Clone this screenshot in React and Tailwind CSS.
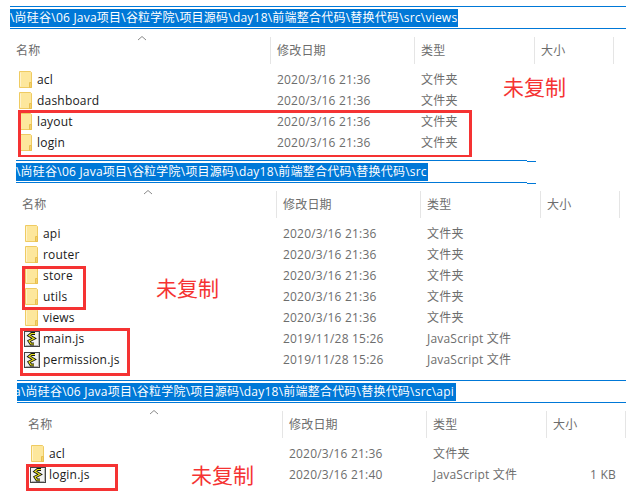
const YH = "font-['Open_Sans','Noto_Sans_CJK_SC',sans-serif]";

function Folder() {
  return (
    <svg width="14" height="17" viewBox="0 0 14 17" className="block shrink-0">
      <path d="M0.5 0.5H11.5L12.5 1.5V16.5H0.5Z" fill="#fde79c" stroke="#efcb62" />
      <path d="M1.5 1.5V15.5" fill="none" stroke="#fff3cc" />
      <path d="M12.5 11.5H10.5V16.5H12.5Z" fill="#f4d26c" stroke="#e8c050" />
    </svg>
  );
}

function Script() {
  return (
    <svg width="16" height="16" viewBox="0 0 16 16" className="block shrink-0 -ml-[1px]">
      <rect x="0.5" y="0.5" width="15" height="15" fill="#f2f2f2" stroke="#444" />
      <path d="M1.5 14.5H14.5V1.5" fill="none" stroke="#b5b5b5" />
      <path d="M11 2.5H7.5L5 4.5L10 7.5L5 10L7 13H10" fill="none" stroke="#111" strokeWidth="2.8" />
      <path d="M11 2.5H7.5L5 4.5L10 7.5L5 10L7 13H10" fill="none" stroke="#ece420" strokeWidth="1.2" />
    </svg>
  );
}

function PathBar({ left, right, selWidth, children, textShift }) {
  return (
    <div
      className="h-[23px] border-y border-[#0078d7] overflow-hidden pt-[2px]"
      style={{ marginLeft: left, marginRight: right }}
    >
      <div
        className="h-[18px] bg-[#0078d7] text-white text-[12px] tracking-[0.22px] leading-[18px] whitespace-nowrap overflow-hidden"
        style={{ width: selWidth }}
      >
        <span className="block" style={{ marginLeft: textShift }}>{children}</span>
      </div>
    </div>
  );
}

function Header({ left }) {
  return (
    <div className="relative h-[27px] text-[12px] tracking-[0.2px] text-[#6d6d6d]" style={{ marginLeft: left }}>
      <div className="flex h-full">
        <div className="w-[260px] pl-[6px] flex items-center">名称</div>
        <div className="w-[144px] pl-[6px] flex items-center border-l border-[#e5e5e5]">修改日期</div>
        <div className="w-[120px] pl-[6px] flex items-center border-l border-[#e5e5e5]">类型</div>
        <div className="w-[80px] pl-[6px] flex items-center border-x border-[#e5e5e5]">大小</div>
      </div>
      <svg width="10" height="6" viewBox="0 0 10 6" className="absolute left-[127px] -top-[2px]">
        <path d="M1 5L5 1.5L9 5" fill="none" stroke="#8a8a8a" />
      </svg>
    </div>
  );
}

function Row({ left, icon, name, date, type, size }) {
  return (
    <div className="flex h-[21px] items-center text-[12px] tracking-[0.2px]" style={{ marginLeft: left }}>
      <div className="w-[260px] flex items-center pl-[9px] text-[#1a1a1a]">
        <div className="w-[18px]">{icon === "js" ? <Script /> : <Folder />}</div>
        <span>{name}</span>
      </div>
      <div className="w-[144px] pl-[7px] text-[#6d6d6d]">{date}</div>
      <div className="w-[120px] pl-[7px] text-[#6d6d6d]">{type}</div>
      <div className="w-[60px] text-right text-[#6d6d6d] ml-[10px]">{size}</div>
    </div>
  );
}

const P = "\\尚硅谷\\06 Java项目\\谷粒学院\\项目源码\\day18\\前端整合代码\\替换代码\\src";

function Box({ className }) {
  return <div className={"absolute border-[3px] border-[#f53333] " + className} />;
}

function Note({ className }) {
  return <div className={"absolute text-[21px] leading-[24px] text-[#f53333] " + className}>未复制</div>;
}

export default function App() {
  return (
    <div className={"relative w-[626px] h-[498px] bg-white overflow-hidden " + YH}>
      <div className="pt-[6px]">
        <PathBar left={10} right={0} selWidth={448}>{P + "\\views"}</PathBar>
      </div>
      <div className="pt-[8px]">
        <Header left={10} />
      </div>
      <div className="pt-[5px]">
        {["acl", "dashboard", "layout", "login"].map((n) => (
          <Row key={n} left={10} name={n} date="2020/3/16 21:36" type="文件夹" />
        ))}
      </div>

      <div className="pt-[7px]">
        <PathBar left={16} right={99} selWidth={412}>{P}</PathBar>
      </div>
      <div className="pt-[8px]">
        <Header left={16} />
      </div>
      <div className="pt-[5px]">
        {["api", "router", "store", "utils", "views"].map((n) => (
          <Row key={n} left={16} name={n} date="2020/3/16 21:36" type="文件夹" />
        ))}
        {["main.js", "permission.js"].map((n) => (
          <Row key={n} left={16} icon="js" name={n} date="2019/11/28 15:26" type="JavaScript 文件" />
        ))}
      </div>

      <div className="pt-[10px]">
        <PathBar left={17} right={0} selWidth={439} textShift={-3}>{"a" + P + "\\api"}</PathBar>
      </div>
      <div className="pt-[8px]">
        <Header left={22} />
      </div>
      <div className="pt-[5px]">
        <Row left={22} name="acl" date="2020/3/16 21:36" type="文件夹" />
        <Row left={22} icon="js" name="login.js" date="2020/3/16 21:40" type="JavaScript 文件" size="1 KB" />
      </div>

      <div className="absolute left-[527px] top-[161px] w-[9px] h-px bg-[#0078d7]" />
      <div className="absolute left-[527px] top-[183px] w-[9px] h-px bg-[#0078d7]" />

      <Box className="left-[18px] top-[110px] w-[454px] h-[47px] border-b-[2px]" />
      <Box className="left-[22px] top-[266px] w-[64px] h-[44px]" />
      <Box className="left-[20px] top-[328px] w-[110px] h-[48px]" />
      <Box className="left-[26px] top-[464px] w-[92px] h-[27px]" />
      <Note className="left-[503px] top-[75px]" />
      <Note className="left-[156px] top-[276px]" />
      <Note className="left-[191px] top-[463px]" />
    </div>
  );
}
